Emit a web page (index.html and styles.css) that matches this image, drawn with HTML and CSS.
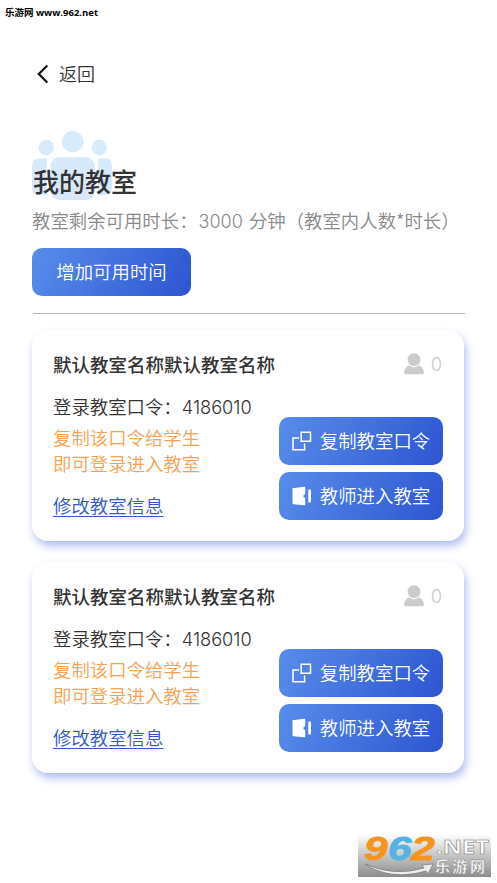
FILE: index.html
```html
<!DOCTYPE html>
<html lang="zh-CN">
<head>
    <meta charset="UTF-8">
    <meta name="viewport" content="width=device-width, initial-scale=1.0">
    <title>我的教室</title>
    <link rel="stylesheet" href="styles.css">
</head>
<body>
    <svg width="0" height="0" class="defs">
        <symbol id="icon-user" viewBox="0 0 20 22">
            <circle cx="10" cy="6.6" r="6.4"/>
            <path d="M5 12.3Q10 16 15 12.3Q19.5 14.5 20 19.5Q20 21.3 18.2 21.3H1.8Q0 21.3 0 19.5Q.5 14.5 5 12.3Z"/>
        </symbol>
        <symbol id="icon-copy" viewBox="0 0 20 20">
            <path d="M9.2 1.3H18.5V10.3H9.2ZM7 7H1V18.7H12.6V12.6" fill="none" stroke="currentColor" stroke-width="1.5"/>
        </symbol>
        <symbol id="icon-door" viewBox="0 0 20 20">
            <path d="M.5 2.2L12 .8Q13.3.7 13.3 2V8.2Q11.3 8.6 11.3 10Q11.3 11.4 13.3 11.8V18Q13.3 19.4 12 19.2L1.5 18.2Q.5 18 .5 17Z"/>
            <rect x="16.2" y="3.5" width="2.8" height="13" rx="1"/>
        </symbol>
    </svg>

    <div class="site-mark">乐游网 www.962.net</div>

    <div class="back">
        <svg width="12" height="20" viewBox="0 0 12 20"><path d="M10.3 1.5L1.8 10L10.3 18.5" fill="none" stroke="#111" stroke-width="2.2"/></svg>
        <span>返回</span>
    </div>

    <div class="header">
        <svg class="header-bg" width="80" height="69" viewBox="0 0 80 69">
            <defs>
                <linearGradient id="people" x1="0" y1="0" x2="0" y2="69" gradientUnits="userSpaceOnUse">
                    <stop offset="0" stop-color="#d5edfd"/>
                    <stop offset="1" stop-color="#d9e7fa"/>
                </linearGradient>
            </defs>
            <g fill="url(#people)">
                <circle cx="40.7" cy="10.7" r="10.7"/>
                <circle cx="14.3" cy="16.5" r="7.7"/>
                <circle cx="67.3" cy="16.5" r="7.7"/>
                <rect x="18.5" y="26" width="44.5" height="43" rx="9"/>
                <path d="M7 27.5H14.8V64H7Q0 64 0 57V34.500Q0 27.500 7 27.500Z"/>
                <path d="M66 27.500H73Q80 27.500 80 34.500V57Q80 64 73 64H66Z"/>
            </g>
        </svg>
        <h1>我的教室</h1>
        <p class="remain">教室剩余可用时长：<span class="num">3000</span> 分钟（教室内人数*时长）</p>
        <button class="btn btn-add">增加可用时间</button>
    </div>

    <div class="rooms">
        <div class="card">
            <div class="card-top">
                <h2>默认教室名称默认教室名称</h2>
                <div class="people"><svg width="20" height="22"><use href="#icon-user"/></svg><span>0</span></div>
            </div>
            <div class="card-body">
                <div class="info">
                    <p class="code">登录教室口令：<span class="num">4186010</span></p>
                    <p class="tip">复制该口令给学生<br>即可登录进入教室</p>
                    <a href="#" class="edit">修改教室信息</a>
                </div>
                <div class="actions">
                    <button class="btn"><svg width="20" height="20"><use href="#icon-copy"/></svg>复制教室口令</button>
                    <button class="btn"><svg width="20" height="20"><use href="#icon-door"/></svg>教师进入教室</button>
                </div>
            </div>
        </div>

        <div class="card">
            <div class="card-top">
                <h2>默认教室名称默认教室名称</h2>
                <div class="people"><svg width="20" height="22"><use href="#icon-user"/></svg><span>0</span></div>
            </div>
            <div class="card-body">
                <div class="info">
                    <p class="code">登录教室口令：<span class="num">4186010</span></p>
                    <p class="tip">复制该口令给学生<br>即可登录进入教室</p>
                    <a href="#" class="edit">修改教室信息</a>
                </div>
                <div class="actions">
                    <button class="btn"><svg width="20" height="20"><use href="#icon-copy"/></svg>复制教室口令</button>
                    <button class="btn"><svg width="20" height="20"><use href="#icon-door"/></svg>教师进入教室</button>
                </div>
            </div>
        </div>
    </div>

    <div class="logo">
        <svg width="133" height="43" viewBox="0 0 133 43">
            <text class="logo-num" x="6" y="26" textLength="71" lengthAdjust="spacingAndGlyphs"><tspan>9</tspan><tspan class="blue">6</tspan><tspan>2</tspan></text>
            <path d="M7 30Q36 43 66 34L64 31L75 30L70 40L68 37Q32 47 7 30Z" fill="#eee" stroke="#777" stroke-width=".7"/>
            <text class="logo-net" x="78" y="20" textLength="53" lengthAdjust="spacingAndGlyphs">.NET</text>
            <text class="logo-cn" x="77" y="38" textLength="50">乐游网</text>
        </svg>
    </div>
</body>
</html>
```

FILE: styles.css
```css
* {
    box-sizing: border-box;
}
body {
    margin: 0;
    height: 883px;
    background-color: #fff;
    color: #333;
    font-family: "Noto Sans CJK SC", sans-serif;
    font-size: 18.4px;
    font-weight: 350;
    overflow: hidden;
}
h1, h2, p {
    margin: 0;
}
.defs {
    display: block;
}
.site-mark {
    height: 26px;
    padding-left: 5px;
    font-family: "Open Sans", "Noto Sans CJK SC", sans-serif;
    font-size: 9.5px;
    font-weight: 700;
    line-height: 26px;
    color: #000;
}
.back {
    display: flex;
    align-items: center;
    gap: 10px;
    height: 28px;
    margin: 34px 0 0 37px;
    font-size: 18px;
}
.back span {
    padding-bottom: 2px;
}
.header {
    position: relative;
    height: 183px;
    margin: 43px 32px 0 33px;
    padding-top: 31px;
    border-bottom: 1px solid #b5b5b5;
}
.header-bg {
    position: absolute;
    left: -1px;
    top: 0;
}
h1 {
    position: relative;
    font-size: 26px;
    font-weight: 500;
    line-height: 38px;
}
.remain {
    margin: 6px 0 0 -1px;
    line-height: 28px;
    color: #888;
    white-space: nowrap;
}
.num {
    font-family: Inter, sans-serif;
    font-size: 18.2px;
    font-weight: 300;
}
.remain .num {
    margin: 0 2px 0 1px;
    font-size: 18px;
}
.btn {
    display: flex;
    align-items: center;
    justify-content: center;
    gap: 8px;
    width: 164px;
    height: 48px;
    padding: 0 0 2px;
    border: none;
    border-radius: 10px;
    background: linear-gradient(115deg, #588dea, #2d55d1);
    color: #fff;
    font: inherit;
    cursor: pointer;
}
.btn svg {
    margin-top: 1px;
    fill: #fff;
}
.btn-add {
    width: 159px;
    margin: 12px 0 0 -1px;
}
.rooms {
    display: flex;
    flex-direction: column;
    gap: 21px;
    margin: 16px 33px 0 32px;
}
.card {
    height: 211px;
    padding: 20px 21px 0;
    border-radius: 16px;
    background-color: #fff;
    box-shadow: 2px 5px 9px rgba(55, 90, 215, 0.4);
}
.card-top {
    display: flex;
    justify-content: space-between;
    align-items: center;
    height: 28px;
}
h2 {
    font-size: 18.5px;
    font-weight: 500;
}
.people {
    display: flex;
    align-items: center;
    gap: 7px;
    margin-right: 1px;
    color: #ccc;
    font-family: Inter, sans-serif;
    font-weight: 300;
}
.people svg {
    fill: #ccc;
}
.card-body {
    display: flex;
    justify-content: space-between;
}
.info {
    padding-top: 14px;
}
.code {
    line-height: 28px;
}
.tip {
    margin-top: 3px;
    line-height: 26px;
    color: #f7a250;
}
.edit {
    display: block;
    margin-top: 15px;
    line-height: 28px;
    color: #3059c5;
    text-decoration-thickness: 1px;
    text-underline-offset: 3px;
}
.actions {
    display: flex;
    flex-direction: column;
    gap: 7px;
    padding-top: 39px;
}
.logo {
    width: 133px;
    height: 43px;
    margin: 61px 0 0 358px;
    background: linear-gradient(#fff, #8c8c8c);
}
.logo svg {
    display: block;
    overflow: visible;
}
.logo-num {
    font: italic 700 34px "Liberation Sans", sans-serif;
    fill: #f7941d;
    stroke: #f7941d;
    stroke-width: 0.8px;
}
.logo-num .blue {
    fill: #55b3e4;
    stroke: #55b3e4;
}
.logo-net {
    font: 700 19px "Open Sans", sans-serif;
    fill: #fff;
    stroke: #777;
    stroke-width: 0.5px;
}
.logo-cn {
    font: 700 15px "Noto Sans CJK SC", sans-serif;
    fill: #fff;
    stroke: #777;
    stroke-width: 0.3px;
}
```
